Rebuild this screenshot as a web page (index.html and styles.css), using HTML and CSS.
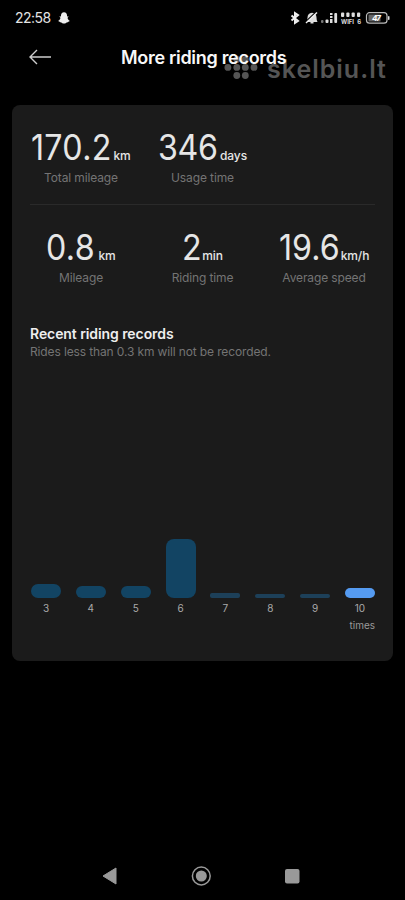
FILE: index.html
```
<!DOCTYPE html>
<html lang="en">
<head>
<meta charset="utf-8">
<title>More riding records</title>
<link rel="stylesheet" href="styles.css">
</head>
<body>
<div class="screen">
  <div class="status">
    <span class="clock">22:58</span>
    <svg class="snap" width="12" height="12" viewBox="0 0 12 12"><path d="M6 .2C4 .2 3 1.600 3 3.300V4.500L1.500 4.300C1.700 5.400 2.500 5.500 2.400 6.200C2.100 7.300 1.200 8.300.2 8.800C.4 9.600 1.700 9.500 2.100 10.300C3.700 10 4 11.600 6 11.600S8.300 10 9.900 10.300C10.300 9.500 11.600 9.600 11.800 8.800C10.800 8.300 9.900 7.300 9.600 6.200C9.500 5.500 10.300 5.400 10.500 4.300L9 4.500V3.300C9 1.600 8 .2 6 .2Z"/></svg>
    <svg class="indicators" width="101" height="18" viewBox="0 0 101 18">
      <path d="M1.500 6.500L8 12L5 14V4L8 6L1.500 11.500" fill="none" stroke="#eee" stroke-width="2"/>
      <path d="M16.500 13Q17.500 11.800 17.500 8.500Q17.500 4.500 22 3.800Q26.500 4.500 26.500 8.500Q26.500 11.800 27.500 13ZM20.500 13H23.500V14.500H20.500Z" fill="#ddd"/>
      <path d="M16 12.500L26 3" stroke="#000" stroke-width="1.300"/>
      <path d="M16 14L27 3.500" stroke="#eee" stroke-width="1.400"/>
      <rect x="31" y="11" width="2.500" height="3" rx="1" fill="#777"/>
      <rect x="35.500" y="10.500" width="3" height="3.500" rx="1"/>
      <path d="M40 4h2.500v2H40zM40 7h2.500v2H40zM40 10h2.500v4H40z"/>
      <rect x="44.300" y="4" width="2.800" height="10" rx="1"/>
      <rect x="51" y="3.500" width="3.200" height="4.500" rx="1"/><rect x="56.300" y="3.500" width="3.200" height="4.500" rx="1"/><rect x="61.600" y="3.500" width="3.200" height="4.500" rx="1"/><rect x="67" y="3.500" width="3.200" height="4.500" rx="1"/>
      <text x="51" y="15" class="wifi" textLength="13" lengthAdjust="spacingAndGlyphs">WIFI</text>
      <text x="67.200" y="15" class="wifi" textLength="3.500">6</text>
      <rect x="76.500" y="3.700" width="20.500" height="10.500" rx="3" fill="none" stroke="#bbb" stroke-width="1.200"/>
      <rect x="78.500" y="5.500" width="12" height="7" fill="#666"/>
      <rect x="98" y="7" width="1.500" height="4" rx=".7"/>
      <text x="82" y="12" class="charge" textLength="9">47</text>
    </svg>
  </div>
  <header class="header">
    <svg class="back" width="24" height="18" viewBox="0 0 24 18"><path d="M9 2L2 9L9 16M2 9H23" fill="none" stroke="#ccc" stroke-width="1.400"/></svg>
    <h1 class="title">More riding records</h1>
    <div class="watermark">
      <svg width="36" height="23" viewBox="0 0 36 23"><g fill="#555"><circle cx="12.800" cy="3.400" r="3.400"/><circle cx="21.300" cy="3.400" r="3.400"/><circle cx="3.900" cy="11.400" r="3.400"/><circle cx="12.800" cy="11.400" r="3.400"/><circle cx="21.300" cy="11.400" r="3.400"/><circle cx="30" cy="11.400" r="3.400"/><circle cx="12.800" cy="19.500" r="3.400"/><circle cx="21.300" cy="19.500" r="3.400"/></g></svg>
      <span class="brand">skelbiu.lt</span>
    </div>
  </header>
  <main class="card">
    <section class="totals">
      <div class="stat first"><div class="value"><span class="num n1">170.2</span><span class="unit">km</span></div><div class="label">Total mileage</div></div>
      <div class="stat second"><div class="value"><span class="num n2">346</span><span class="unit">days</span></div><div class="label">Usage time</div></div>
    </section>
    <section class="trip">
      <div class="stat"><div class="value"><span class="num n3">0.8</span><span class="unit">km</span></div><div class="label">Mileage</div></div>
      <div class="stat"><div class="value"><span class="num n4">2</span><span class="unit">min</span></div><div class="label">Riding time</div></div>
      <div class="stat"><div class="value"><span class="num n5">19.6</span><span class="unit">km/h</span></div><div class="label">Average speed</div></div>
    </section>
    <h2 class="subtitle">Recent riding records</h2>
    <p class="note">Rides less than 0.3 km will not be recorded.</p>
    <section class="chart">
      <div class="col"><i class="bar" style="height:14px"></i><span>3</span></div>
      <div class="col"><i class="bar" style="height:12px"></i><span>4</span></div>
      <div class="col"><i class="bar" style="height:12px"></i><span>5</span></div>
      <div class="col"><i class="bar" style="height:59px"></i><span>6</span></div>
      <div class="col"><i class="bar low" style="height:5px"></i><span>7</span></div>
      <div class="col"><i class="bar low" style="height:4px"></i><span>8</span></div>
      <div class="col"><i class="bar low" style="height:4px"></i><span>9</span></div>
      <div class="col"><i class="bar active" style="height:10px"></i><span>10</span></div>
    </section>
    <div class="axis">times</div>
  </main>
  <nav class="nav">
    <svg width="206" height="22" viewBox="0 0 206 22"><path d="M1 11L14 3V19Z" stroke="#999" stroke-linejoin="round"/><circle cx="99.300" cy="11" r="8.900" fill="none" stroke="#999" stroke-width="1.500"/><circle cx="99.300" cy="11" r="5.500"/><rect x="183" y="4" width="14.500" height="14.500" rx="2"/></svg>
  </nav>
</div>
</body>
</html>
```
FILE: styles.css
```
* { box-sizing: border-box; }
body { margin: 0; background: #000; font-family: Inter, sans-serif; }
h1, h2, p { margin: 0; }
svg { display: block; flex: none; }
.screen { width: 405px; height: 900px; display: flex; flex-direction: column; background: #000; overflow: hidden; }
.status { height: 36px; padding: 0 14px 0 15px; display: flex; align-items: center; }
.clock { width: 36px; font-size: 14px; line-height: 20px; letter-spacing: -.5px; color: #e4e4e4; white-space: nowrap; }
.snap { margin-left: 7px; fill: #eee; }
.indicators { margin-left: auto; fill: #ddd; }
.wifi { font: 700 6px Inter, sans-serif; }
.charge { font: italic 700 8px Inter, sans-serif; fill: #fff; }
.header { position: relative; height: 69px; padding: 8px 0 0 28px; display: flex; align-items: flex-start; }
.back { margin-top: 4px; }
.title { position: relative; z-index: 1; margin-left: 69px; font-size: 18px; line-height: 28px; font-weight: 600; letter-spacing: -.3px; color: #f8f8f8; white-space: nowrap; }
.watermark { position: absolute; left: 224px; top: 20px; display: flex; }
.brand { margin: -1px 0 0 7px; font-size: 25px; line-height: 28px; font-weight: 600; letter-spacing: 1px; color: #555; }
.card { flex: none; width: 381px; height: 556px; margin-left: 12px; padding: 25px 18px 0; border-radius: 8px; background: #1b1b1b; }
.totals { height: 75px; display: flex; border-bottom: 1px solid #2a2a2a; }
.stat { text-align: center; white-space: nowrap; }
.first { width: 102px; }
.second { width: 89px; margin-left: 26px; }
.value { height: 35px; display: flex; justify-content: center; align-items: baseline; line-height: 35px; color: #e6e6e6; }
.num { flex: none; text-align: left; font-size: 35px; letter-spacing: -.4px; transform: scaleX(.92); transform-origin: 0 50%; }
.n1 { width: 81px; letter-spacing: .3px; }
.n2 { width: 61px; }
.n3 { width: 51px; letter-spacing: .4px; }
.n4 { width: 19px; }
.n5 { width: 61px; letter-spacing: 0; }
.unit { margin-left: 1px; font-size: 12px; font-weight: 500; letter-spacing: -.1px; }
.label { margin-top: 4px; font-size: 12px; line-height: 18px; letter-spacing: -.12px; color: #747474; }
.trip { display: grid; grid-template-columns: 102px 141px 102px; height: 119px; padding-top: 25px; }
.subtitle { font-size: 14px; line-height: 20px; font-weight: 600; letter-spacing: -.08px; color: #eee; }
.note { font-size: 12px; line-height: 16px; letter-spacing: -.13px; color: #747474; white-space: nowrap; }
.chart { height: 255px; display: flex; justify-content: space-between; padding: 0 0 0 1px; }
.col { width: 30px; display: flex; flex-direction: column; justify-content: flex-end; align-items: center; font-size: 10px; line-height: 14px; color: #aaa; }
.col span { margin-top: 3px; }
.bar { width: 30px; flex: none; border-radius: 8px; background: #124463; }
.low { border-radius: 2px; background: #1d4059; }
.active { background: #559bf1; }
.axis { margin-top: 2px; text-align: right; font-size: 10px; line-height: 17px; color: #999; }
.nav { margin-top: 204px; padding-left: 102px; fill: #999; }
```
